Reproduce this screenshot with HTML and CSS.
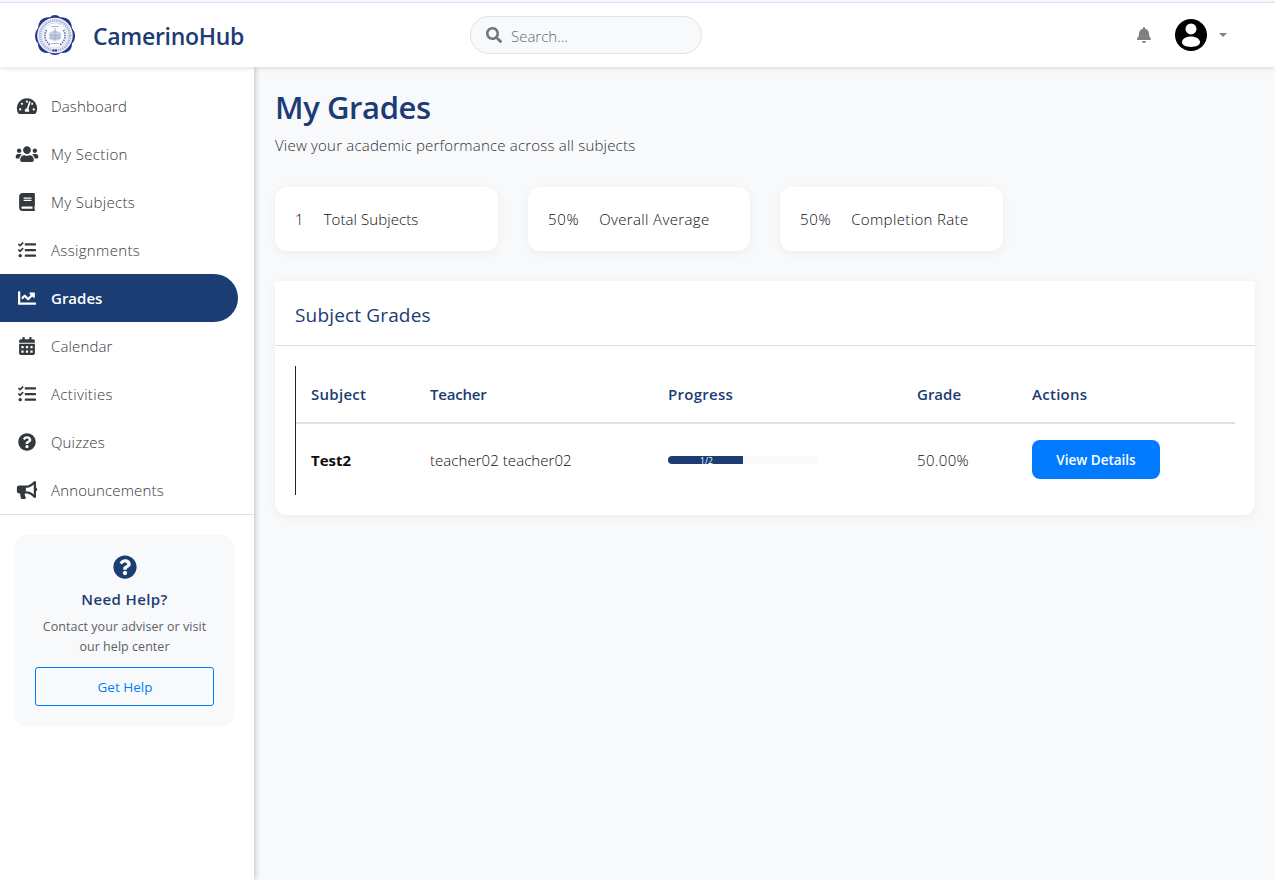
FILE: index.html
```html
<!DOCTYPE html>
<html lang="en">
<head>
<meta charset="utf-8">
<title>My Grades - CamerinoHub</title>
<link rel="stylesheet" href="styles.css">
</head>
<body>
<svg class="sprite" aria-hidden="true">
  <symbol id="tasks" viewBox="0 0 512 512"><path d="M139.61 35.5a12 12 0 0 0-17 0L58.93 98.81l-22.7-22.12a12 12 0 0 0-17 0L3.53 92.41a12 12 0 0 0 0 17l47.59 47.4a12.78 12.78 0 0 0 17.61 0l15.59-15.62L156.52 69a12.09 12.09 0 0 0 .09-17zm0 159.19a12 12 0 0 0-17 0l-63.68 63.72-22.7-22.1a12 12 0 0 0-17 0L3.53 252a12 12 0 0 0 0 17L51 316.5a12.77 12.77 0 0 0 17.6 0l15.7-15.69 72.2-72.22a12 12 0 0 0 .09-16.9zM64 368c-26.49 0-48.59 21.5-48.59 48S37.53 464 64 464a48 48 0 0 0 0-96zm432 16H208a16 16 0 0 0-16 16v32a16 16 0 0 0 16 16h288a16 16 0 0 0 16-16v-32a16 16 0 0 0-16-16zm0-320H208a16 16 0 0 0-16 16v32a16 16 0 0 0 16 16h288a16 16 0 0 0 16-16V80a16 16 0 0 0-16-16zm0 160H208a16 16 0 0 0-16 16v32a16 16 0 0 0 16 16h288a16 16 0 0 0 16-16v-32a16 16 0 0 0-16-16z"/></symbol>
  <symbol id="question" viewBox="0 0 512 512"><path d="M504 256c0 136.997-111.043 248-248 248S8 392.997 8 256C8 119.083 119.043 8 256 8s248 111.083 248 248zM262.655 90c-54.497 0-89.255 22.957-116.549 63.758-3.536 5.286-2.353 12.415 2.715 16.258l34.699 26.31c5.205 3.947 12.621 3.008 16.665-2.122 17.864-22.658 30.113-35.797 57.303-35.797 20.429 0 45.698 13.148 45.698 32.958 0 14.976-12.363 22.667-32.534 33.976C247.128 238.528 216 254.941 216 296v4c0 6.627 5.373 12 12 12h56c6.627 0 12-5.373 12-12v-1.333c0-28.462 83.186-29.647 83.186-106.667 0-58.002-60.165-102-116.531-102zM256 338c-25.365 0-46 20.635-46 46 0 25.364 20.635 46 46 46s46-20.636 46-46c0-25.365-20.635-46-46-46z"/></symbol>
</svg>

<header class="topbar">
  <a class="brand">
    <svg class="seal" viewBox="0 0 40 40">
      <path class="seal-edge" d="M20 0q3 0 5 2.300Q31 2 34.500 5.500 37 9 37 13q3 3.500 3 8t-3 7.500q0 5-3 7.500t-8 1.800Q23 40 20 40t-6-2.200Q9 38.500 6 36t-3-7.500Q0 25.500 0 21t3-8q0-4 2.500-7.500Q9 2 15 2.300 17 0 20 0z"/>
      <circle class="seal-face" cx="20" cy="20.500" r="17.800"/>
      <circle class="seal-letters" cx="20" cy="20.500" r="15"/>
      <circle class="seal-ring" cx="20" cy="20.500" r="12.500"/>
      <path class="seal-laurel" d="M11.500 15Q7 23 15 30M28.500 15Q33 23 25 30"/>
      <path class="seal-book" d="M14 18l6-3 6 3v6l-6 2-6-2z"/>
      <path class="seal-lines" d="M16 11.500h8M15 20.500h10M15 23h10M16 28.500h8M20 13v12"/>
      <path class="seal-foot" d="M17.500 35.500h5"/>
    </svg>
    <span class="brand-name">CamerinoHub</span>
  </a>
  <div class="search">
    <svg class="search-icon" viewBox="0 0 512 512"><path d="M505 442.700L405.300 343c-4.500-4.500-10.600-7-17-7H372c27.600-35.300 44-79.700 44-128C416 93.100 322.900 0 208 0S0 93.100 0 208s93.100 208 208 208c48.300 0 92.700-16.400 128-44v16.300c0 6.400 2.500 12.500 7 17l99.700 99.700c9.400 9.400 24.600 9.400 33.900 0l28.300-28.300c9.400-9.400 9.400-24.600.1-34zM208 336c-70.700 0-128-57.200-128-128 0-70.700 57.200-128 128-128 70.700 0 128 57.200 128 128 0 70.700-57.200 128-128 128z"/></svg>
    <span class="search-text">Search...</span>
  </div>
  <div class="user">
    <svg class="bell" viewBox="0 0 448 512"><path d="M224 512c35.320 0 63.970-28.650 63.970-64H160.030c0 35.350 28.650 64 63.970 64zm215.390-149.710c-19.320-20.760-55.470-51.990-55.470-154.290 0-77.700-54.480-139.900-127.940-155.160V32c0-17.670-14.320-32-31.980-32s-31.980 14.330-31.980 32v20.840C118.560 68.100 64.080 130.300 64.080 208c0 102.300-36.150 133.530-55.470 154.290-6 6.450-8.660 14.160-8.610 21.710.11 16.400 12.980 32 32.100 32h383.800c19.120 0 32-15.600 32.100-32 .05-7.550-2.610-15.270-8.610-21.710z"/></svg>
    <svg class="avatar" viewBox="0 0 32 32"><circle cx="16" cy="16" r="16"/><circle class="avatar-fig" cx="16" cy="9.900" r="5.500"/><path class="avatar-fig" d="M16 17.600c-5 0-9 2.300-9 5.700 0 2.800 4 4.700 9 4.700s9-1.900 9-4.700c0-3.400-4-5.700-9-5.700z"/></svg>
    <span class="caret"></span>
  </div>
</header>

<div class="shell">
  <aside class="sidebar">
    <nav class="menu">
      <a class="item"><svg class="icon" viewBox="0 0 576 512"><path d="M288 32C128.940 32 0 160.940 0 320c0 52.800 14.250 102.260 39.060 144.800 5.610 9.620 16.300 15.200 27.440 15.200h443c11.140 0 21.830-5.580 27.440-15.200C561.750 422.260 576 372.800 576 320c0-159.060-128.940-288-288-288zm0 64c14.710 0 26.580 10.130 30.320 23.650-1.110 2.260-2.640 4.230-3.450 6.670l-9.220 27.670c-5.130 3.490-10.970 6.010-17.640 6.010-17.670 0-32-14.330-32-32S270.330 96 288 96zM96 384c-17.670 0-32-14.330-32-32s14.330-32 32-32 32 14.330 32 32-14.330 32-32 32zm48-160c-17.670 0-32-14.330-32-32s14.330-32 32-32 32 14.330 32 32-14.330 32-32 32zm246.770-72.410l-61.330 184C343.130 347.330 352 364.540 352 384c0 11.720-3.380 22.550-8.880 32H232.880c-5.500-9.450-8.880-20.280-8.880-32 0-33.940 26.500-61.430 59.900-63.590l61.340-184.010c4.170-12.560 17.730-19.450 30.360-15.170 12.570 4.190 19.350 17.790 15.170 30.360zm14.660 57.200l15.520-46.550c3.470-1.290 7.130-2.230 11.050-2.230 17.670 0 32 14.330 32 32s-14.330 32-32 32c-11.380-.01-20.890-6.280-26.570-15.220zM480 384c-17.670 0-32-14.330-32-32s14.330-32 32-32 32 14.330 32 32-14.330 32-32 32z"/></svg><span class="label">Dashboard</span></a>
      <a class="item"><svg class="icon" viewBox="0 0 640 512"><path d="M96 224c35.300 0 64-28.700 64-64s-28.700-64-64-64-64 28.700-64 64 28.700 64 64 64zm448 0c35.300 0 64-28.700 64-64s-28.700-64-64-64-64 28.700-64 64 28.700 64 64 64zm32 32h-64c-17.600 0-33.500 7.100-45.100 18.600 40.300 22.100 68.900 62 75.100 109.400h66c17.700 0 32-14.300 32-32v-32c0-35.300-28.700-64-64-64zm-256 0c61.900 0 112-50.100 112-112S381.900 32 320 32 208 82.100 208 144s50.100 112 112 112zm76.800 32h-8.300c-20.800 10-43.900 16-68.500 16s-47.600-6-68.500-16h-8.300C179.600 288 128 339.600 128 403.200V432c0 26.500 21.500 48 48 48h288c26.500 0 48-21.500 48-48v-28.800c0-63.600-51.600-115.200-115.200-115.200zm-223.700-13.400C161.500 263.100 145.600 256 128 256H64c-35.300 0-64 28.700-64 64v32c0 17.700 14.300 32 32 32h65.900c6.300-47.400 34.900-87.300 75.200-109.400z"/></svg><span class="label wide">My Section</span></a>
      <a class="item"><svg class="icon" viewBox="0 0 448 512"><path d="M448 360V24c0-13.300-10.700-24-24-24H96C43 0 0 43 0 96v320c0 53 43 96 96 96h328c13.300 0 24-10.700 24-24v-16c0-7.500-3.500-14.300-8.900-18.700-4.200-15.400-4.200-59.300 0-74.700 5.400-4.300 8.900-11.100 8.900-18.600zM128 134c0-3.300 2.700-6 6-6h212c3.300 0 6 2.700 6 6v20c0 3.300-2.700 6-6 6H134c-3.300 0-6-2.700-6-6v-20zm0 64c0-3.300 2.700-6 6-6h212c3.300 0 6 2.700 6 6v20c0 3.300-2.700 6-6 6H134c-3.300 0-6-2.700-6-6v-20zm253.400 250H96c-17.700 0-32-14.300-32-32 0-17.600 14.400-32 32-32h285.400c-1.900 17.100-1.900 46.900 0 64z"/></svg><span class="label wide">My Subjects</span></a>
      <a class="item"><svg class="icon"><use href="#tasks"/></svg><span class="label wide">Assignments</span></a>
      <a class="item active"><svg class="icon" viewBox="0 0 512 512"><path d="M496 384H64V80c0-8.840-7.160-16-16-16H16C7.160 64 0 71.160 0 80v336c0 17.670 14.330 32 32 32h464c8.840 0 16-7.160 16-16v-32c0-8.840-7.160-16-16-16zM464 96H345.940c-21.380 0-32.090 25.850-16.970 40.970l32.400 32.400L288 242.750l-73.370-73.370c-12.500-12.500-32.760-12.500-45.250 0l-68.690 68.690c-6.250 6.250-6.250 16.380 0 22.630l22.620 22.620c6.250 6.250 16.380 6.250 22.630 0L192 237.250l73.370 73.370c12.500 12.500 32.760 12.500 45.250 0l96-96 32.400 32.400c15.120 15.120 40.970 4.410 40.970-16.970V112c.01-8.840-7.150-16-15.990-16z"/></svg><span>Grades</span></a>
      <a class="item"><svg class="icon" viewBox="0 0 448 512"><path fill-rule="evenodd" d="M0 464c0 26.500 21.500 48 48 48h352c26.500 0 48-21.500 48-48V192H0zM64 256h64v64H64zM192 256h64v64h-64zM320 256h64v64h-64zM64 384h64v64H64zM192 384h64v64h-64zM320 384h64v64h-64zM400 64h-48V16c0-8.800-7.200-16-16-16h-32c-8.800 0-16 7.200-16 16v48H160V16c0-8.800-7.200-16-16-16h-32c-8.800 0-16 7.200-16 16v48H48C21.500 64 0 85.500 0 112v48h448v-48c0-26.500-21.500-48-48-48z"/></svg><span class="label">Calendar</span></a>
      <a class="item"><svg class="icon"><use href="#tasks"/></svg><span class="label wide">Activities</span></a>
      <a class="item"><svg class="icon"><use href="#question"/></svg><span class="label">Quizzes</span></a>
      <a class="item"><svg class="icon" viewBox="0 0 576 512"><path d="M576 240c0-23.630-12.950-44.040-32-55.120V32.010C544 23.260 537.020 0 512 0c-7.120 0-14.190 2.380-19.980 7.020l-85.030 68.030C364.280 109.190 310.660 128 256 128H64c-35.350 0-64 28.650-64 64v96c0 35.350 28.650 64 64 64h33.700c-1.390 10.480-2.180 21.140-2.180 32 0 39.770 9.260 77.350 25.560 110.940 5.190 10.690 16.520 17.060 28.400 17.060h74.280c26.050 0 41.690-29.840 25.900-50.560-16.400-21.520-26.150-48.360-26.150-77.440 0-11.110 1.620-21.790 4.410-32H256c54.660 0 108.280 18.810 150.980 52.950l85.030 68.030a32.023 32.023 0 0 0 19.980 7.020c24.920 0 32-22.780 32-32V295.130C563.050 284.040 576 263.630 576 240zm-96 141.420l-33.050-26.440C392.950 311.780 325.120 288 256 288v-96c69.120 0 136.950-23.780 190.950-66.980L480 98.580v282.840z"/></svg><span class="label">Announcements</span></a>
    </nav>
    <div class="help">
      <svg class="help-icon"><use href="#question"/></svg>
      <h6 class="help-title">Need Help?</h6>
      <p class="help-text">Contact your adviser or visit<br>our help center</p>
      <a class="help-btn">Get Help</a>
    </div>
  </aside>

  <main class="content">
    <h1 class="title">My Grades</h1>
    <p class="subtitle">View your academic performance across all subjects</p>
    <div class="stats">
      <div class="stat"><span>1</span><span>Total Subjects</span></div>
      <div class="stat"><span class="percent">50%</span><span class="stat-wide">Overall Average</span></div>
      <div class="stat"><span class="percent">50%</span><span class="stat-wide">Completion Rate</span></div>
    </div>
    <section class="card">
      <h5 class="card-head"><span>Subject Grades</span></h5>
      <div class="card-body">
        <div class="table">
          <div class="row head">
            <span class="h-wide">Subject</span><span class="h-tight">Teacher</span><span class="h-wide">Progress</span><span>Grade</span><span class="h-wide">Actions</span>
          </div>
          <div class="row">
            <span class="subject">Test2</span>
            <span class="teacher">teacher02 teacher02</span>
            <div class="progress"><div class="bar" style="width:50%">1/2</div></div>
            <span class="grade">50.00%</span>
            <div><a class="view">View Details</a></div>
          </div>
        </div>
      </div>
    </section>
  </main>
</div>
</body>
</html>
```
FILE: styles.css
```css
* { box-sizing: border-box; }
body {
  margin: 0;
  height: 880px;
  overflow: hidden;
  display: flex;
  flex-direction: column;
  background: #f8f9fb;
  color: #0c0e10;
  font: 300 15px/24px "Open Sans", "Noto Sans", sans-serif;
}
h1, h5, h6, p { margin: 0; }
span { white-space: nowrap; }
svg { fill: currentColor; flex: none; }
.sprite { position: absolute; width: 0; height: 0; }

.topbar {
  position: relative;
  z-index: 2;
  flex: none;
  height: 67px;
  display: grid;
  grid-template-columns: 470px 232px 1fr;
  align-items: center;
  padding-top: 3px;
  background: linear-gradient(#fbf3fe 2px, #e6daf0 2px, #e6daf0 3px, #fff 3px);
  box-shadow: 0 2px 4px rgba(0, 0, 0, .1);
}
.brand { display: flex; align-items: center; gap: 18px; padding-left: 35px; }
.seal { width: 40px; height: 40px; }
.seal-edge { fill: #27378a; }
.seal-face { fill: #eef1f8; }
.seal-letters { fill: none; stroke: #a9b3d3; stroke-width: 2.6; stroke-dasharray: 1.3 .8; }
.seal-ring { fill: #fcfdff; stroke: #c5cee4; stroke-width: .6; }
.seal-laurel { fill: none; stroke: #6675af; stroke-width: 1.8; stroke-dasharray: 1.5 1; }
.seal-book { fill: #c3cede; }
.seal-lines { fill: none; stroke: #9aa8c8; stroke-width: .8; }
.seal-foot { stroke: #27378a; stroke-width: 2; stroke-dasharray: 2 .5; }
.brand-name { padding-top: 2px; color: #1b3c74; font-size: 23px; font-weight: 600; letter-spacing: -.3px; }
.search {
  height: 38px;
  display: flex;
  align-items: center;
  gap: 9px;
  padding-left: 15px;
  border: 1px solid #dee2e6;
  border-radius: 19px;
  background: #f8f9fb;
  color: #6c757d;
}
.search-icon { width: 16px; height: 16px; }
.search-text { padding-top: 2px; color: #5f6870; }
.user { display: flex; align-items: center; justify-content: flex-end; padding-right: 48px; }
.bell { width: 14px; height: 16px; margin-right: 24px; color: #808080; }
.avatar { width: 32px; height: 32px; margin-right: 12px; color: #000; }
.avatar-fig { fill: #fff; }
.caret { border: 4px solid transparent; border-top-color: #808080; border-bottom: 0; }

.shell { flex: 1; display: grid; grid-template-columns: 254px 1fr; }
.sidebar { background: #fff; box-shadow: 2px 0 5px rgba(0, 0, 0, .18); }
.menu { padding-top: 15px; border-bottom: 1px solid #dee2e6; }
.item { height: 48px; display: flex; align-items: center; gap: 12px; padding-left: 15px; color: #34393e; }
.icon { width: 24px; height: 18px; }
.label { letter-spacing: .14px; }
.wide { letter-spacing: .34px; }
.active { width: 238px; border-radius: 0 24px 24px 0; background: #1c3d74; color: #fff; font-weight: 600; }
.help {
  width: 219px;
  height: 191px;
  margin: 20px 0 0 15px;
  padding: 20px;
  border-radius: 12px;
  display: flex;
  flex-direction: column;
  align-items: center;
  background: #f8f9fb;
}
.help-icon { width: 24px; height: 24px; color: #1c3d74; }
.help-title { margin-top: 8px; color: #1c3d74; font: 600 15px/24px "Open Sans", sans-serif; letter-spacing: .4px; }
.help-text { margin-top: 6px; color: #5d6166; font-size: 12.5px; font-weight: 400; line-height: 20px; text-align: center; white-space: nowrap; letter-spacing: .04px; }
.help-btn {
  width: 179px;
  height: 39px;
  margin-top: 10px;
  padding-left: 1px;
  border: 1px solid #007bff;
  border-radius: 3px;
  color: #007bff;
  font-size: 13.5px;
  font-weight: 400;
  line-height: 38px;
  text-align: center;
}

.content { padding: 20px 20px 0 21px; }
.title { color: #1b3c74; font-size: 31px; font-weight: 600; line-height: 40px; letter-spacing: -.4px; }
.subtitle { margin-top: 6px; color: #2b3035; letter-spacing: .2px; }
.stats { display: grid; grid-template-columns: 223px 222px 223px; gap: 30px; margin-top: 30px; }
.stat {
  height: 64px;
  display: flex;
  align-items: center;
  gap: 20px;
  padding: 0 20px;
  border-radius: 12px;
  background: #fff;
  box-shadow: 0 2px 10px rgba(0, 0, 0, .05);
  letter-spacing: .08px;
}
.percent { letter-spacing: .65px; }
.stat-wide { letter-spacing: .36px; }
.card { margin-top: 30px; border-radius: 4px 4px 12px 12px; background: #fff; box-shadow: 0 2px 10px rgba(0, 0, 0, .05); }
.card-head { height: 65px; padding: 22px 20px 0; border-bottom: 1px solid #dedede; color: #1b3c74; font: 500 19px/24px "Open Sans", sans-serif; letter-spacing: .16px; }
.card-body { padding: 20px; }
.table { height: 129px; border-left: 1px solid #212529; }
.row { height: 71px; display: grid; grid-template-columns: 119px 238px 249px 115px 1fr; align-items: center; padding-left: 15px; }
.head { height: 58px; border-bottom: 2px solid #dee2e6; color: #1b3c74; font-weight: 600; }
.h-wide { letter-spacing: .28px; }
.h-tight { letter-spacing: -.2px; }
.teacher { letter-spacing: .05px; }
.grade { letter-spacing: .35px; }
.subject { font-weight: 700; }
.progress { width: 150px; height: 8px; border-radius: 4px; overflow: hidden; background: #f8f9fa; }
.bar { height: 8px; padding-left: 2px; background: #1c3d74; color: #fff; font-size: 8.5px; font-weight: 500; line-height: 9px; text-align: center; }
.view { display: block; width: 128px; height: 39px; border-radius: 8px; background: #007bff; color: #fff; font-size: 13.5px; font-weight: 600; line-height: 40px; text-align: center; }
```
